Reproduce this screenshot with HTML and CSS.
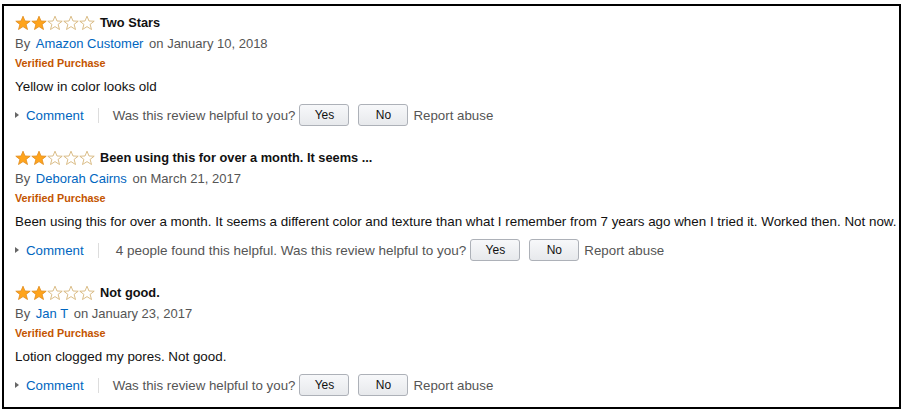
FILE: index.html
```html
<!DOCTYPE html>
<html>
<head>
<meta charset="utf-8">
<link rel="stylesheet" href="styles.css">
</head>
<body>
<div class="frame">
  <div class="review">
    <div class="title-row">
      <span class="stars">
        <svg class="star" viewBox="0 0 16 16"><polygon class="full" points="8,1.2 10,6 15.2,6.2 11.1,9.4 12.5,14.5 8,11.6 3.5,14.5 4.9,9.4 0.8,6.2 6,6"/></svg>
        <svg class="star" viewBox="0 0 16 16"><polygon class="full" points="8,1.2 10,6 15.2,6.2 11.1,9.4 12.5,14.5 8,11.6 3.5,14.5 4.9,9.4 0.8,6.2 6,6"/></svg>
        <svg class="star" viewBox="0 0 16 16"><polygon class="empty" points="8,1.2 10,6 15.2,6.2 11.1,9.4 12.5,14.5 8,11.6 3.5,14.5 4.9,9.4 0.8,6.2 6,6"/></svg>
        <svg class="star" viewBox="0 0 16 16"><polygon class="empty" points="8,1.2 10,6 15.2,6.2 11.1,9.4 12.5,14.5 8,11.6 3.5,14.5 4.9,9.4 0.8,6.2 6,6"/></svg>
        <svg class="star" viewBox="0 0 16 16"><polygon class="empty" points="8,1.2 10,6 15.2,6.2 11.1,9.4 12.5,14.5 8,11.6 3.5,14.5 4.9,9.4 0.8,6.2 6,6"/></svg>
      </span>
      <span class="title">Two Stars</span>
    </div>
    <div class="byline">By <a class="link author">Amazon Customer</a> on January 10, 2018</div>
    <div class="verified">Verified Purchase</div>
    <div class="body">Yellow in color looks old</div>
    <div class="actions">
      <span class="comment"><span class="tri"></span><a class="link">Comment</a></span>
      <span class="sep"></span>
      <span class="muted">Was this review helpful to you?</span>
      <button class="btn">Yes</button>
      <button class="btn">No</button>
      <span class="muted report">Report abuse</span>
    </div>
  </div>

  <div class="review">
    <div class="title-row">
      <span class="stars">
        <svg class="star" viewBox="0 0 16 16"><polygon class="full" points="8,1.2 10,6 15.2,6.2 11.1,9.4 12.5,14.5 8,11.6 3.5,14.5 4.9,9.4 0.8,6.2 6,6"/></svg>
        <svg class="star" viewBox="0 0 16 16"><polygon class="full" points="8,1.2 10,6 15.2,6.2 11.1,9.4 12.5,14.5 8,11.6 3.5,14.5 4.9,9.4 0.8,6.2 6,6"/></svg>
        <svg class="star" viewBox="0 0 16 16"><polygon class="empty" points="8,1.2 10,6 15.2,6.2 11.1,9.4 12.5,14.5 8,11.6 3.5,14.5 4.9,9.4 0.8,6.2 6,6"/></svg>
        <svg class="star" viewBox="0 0 16 16"><polygon class="empty" points="8,1.2 10,6 15.2,6.2 11.1,9.4 12.5,14.5 8,11.6 3.5,14.5 4.9,9.4 0.8,6.2 6,6"/></svg>
        <svg class="star" viewBox="0 0 16 16"><polygon class="empty" points="8,1.2 10,6 15.2,6.2 11.1,9.4 12.5,14.5 8,11.6 3.5,14.5 4.9,9.4 0.8,6.2 6,6"/></svg>
      </span>
      <span class="title">Been using this for over a month. It seems ...</span>
    </div>
    <div class="byline">By <a class="link author">Deborah Cairns</a> on March 21, 2017</div>
    <div class="verified">Verified Purchase</div>
    <div class="body">Been using this for over a month. It seems a different color and texture than what I remember from 7 years ago when I tried it. Worked then. Not now.</div>
    <div class="actions">
      <span class="comment"><span class="tri"></span><a class="link">Comment</a></span>
      <span class="sep"></span>
      <span class="muted helpful">4 people found this helpful. Was this review helpful to you?</span>
      <button class="btn">Yes</button>
      <button class="btn">No</button>
      <span class="muted report">Report abuse</span>
    </div>
  </div>

  <div class="review">
    <div class="title-row">
      <span class="stars">
        <svg class="star" viewBox="0 0 16 16"><polygon class="full" points="8,1.2 10,6 15.2,6.2 11.1,9.4 12.5,14.5 8,11.6 3.5,14.5 4.9,9.4 0.8,6.2 6,6"/></svg>
        <svg class="star" viewBox="0 0 16 16"><polygon class="full" points="8,1.2 10,6 15.2,6.2 11.1,9.4 12.5,14.5 8,11.6 3.5,14.5 4.9,9.4 0.8,6.2 6,6"/></svg>
        <svg class="star" viewBox="0 0 16 16"><polygon class="empty" points="8,1.2 10,6 15.2,6.2 11.1,9.4 12.5,14.5 8,11.6 3.5,14.5 4.9,9.4 0.8,6.2 6,6"/></svg>
        <svg class="star" viewBox="0 0 16 16"><polygon class="empty" points="8,1.2 10,6 15.2,6.2 11.1,9.4 12.5,14.5 8,11.6 3.5,14.5 4.9,9.4 0.8,6.2 6,6"/></svg>
        <svg class="star" viewBox="0 0 16 16"><polygon class="empty" points="8,1.2 10,6 15.2,6.2 11.1,9.4 12.5,14.5 8,11.6 3.5,14.5 4.9,9.4 0.8,6.2 6,6"/></svg>
      </span>
      <span class="title">Not good.</span>
    </div>
    <div class="byline">By <a class="link author">Jan T</a> on January 23, 2017</div>
    <div class="verified">Verified Purchase</div>
    <div class="body">Lotion clogged my pores. Not good.</div>
    <div class="actions">
      <span class="comment"><span class="tri"></span><a class="link">Comment</a></span>
      <span class="sep"></span>
      <span class="muted">Was this review helpful to you?</span>
      <button class="btn">Yes</button>
      <button class="btn">No</button>
      <span class="muted report">Report abuse</span>
    </div>
  </div>
</div>
</body>
</html>
```

FILE: styles.css
```css
* { box-sizing: border-box; }
html, body { margin: 0; padding: 0; background: #fff; }
body {
  font-family: "Liberation Sans", Arial, sans-serif;
  font-size: 13px;
  color: #111;
}
.frame {
  margin: 4px 0 0 2px;
  width: 899px;
  height: 405px;
  border: 2px solid #000;
  padding: 7px 0 0 11px;
  display: flex;
  flex-direction: column;
  gap: 22px;
}
.review { display: flex; flex-direction: column; }
.title-row {
  display: flex;
  align-items: center;
  height: 20px;
}
.stars { display: flex; margin-right: 5px; }
.star { width: 16px; height: 16px; display: block; }
.star .full { fill: #ffa41c; stroke: #e08a1a; stroke-width: 0.8; stroke-linejoin: round; }
.star .empty { fill: #fff; stroke: #d6b57a; stroke-width: 0.9; stroke-linejoin: round; }
.title { font-weight: bold; font-size: 12.8px; line-height: 20px; }
.byline { margin-top: 1px; line-height: 19px; color: #555; }
.link { color: #0066c0; text-decoration: none; }
.author { margin-left: 2px; margin-right: 2px; }
.verified {
  margin-top: 1px;
  line-height: 18px;
  font-size: 10.8px;
  font-weight: bold;
  color: #c45500;
}
.body { margin-top: 5px; line-height: 19px; font-size: 13.4px; color: #111; }
.actions {
  margin-top: 8px;
  height: 22px;
  display: flex;
  align-items: center;
  font-size: 13.3px;
}
.comment { display: flex; align-items: center; }
.tri {
  width: 0; height: 0;
  border-left: 4px solid #666;
  border-top: 3px solid transparent;
  border-bottom: 3px solid transparent;
  margin-right: 7px;
}
.sep {
  width: 1px;
  height: 15px;
  background: #ddd;
  margin: 0 14px 0 14px;
}
.muted { color: #555; }
.helpful { margin-left: 3px; font-size: 13.5px; }
.btn {
  width: 50px;
  height: 22px;
  margin: 0 0 0 4px;
  padding: 0;
  border: 1px solid #adb1b8;
  border-radius: 3px;
  background: linear-gradient(#f7f8fa, #e7e9ec);
  font-family: "Liberation Sans", Arial, sans-serif;
  font-size: 12px;
  color: #111;
}
.btn + .btn { margin-left: 9px; }
.report { margin-left: 5px; }
```
